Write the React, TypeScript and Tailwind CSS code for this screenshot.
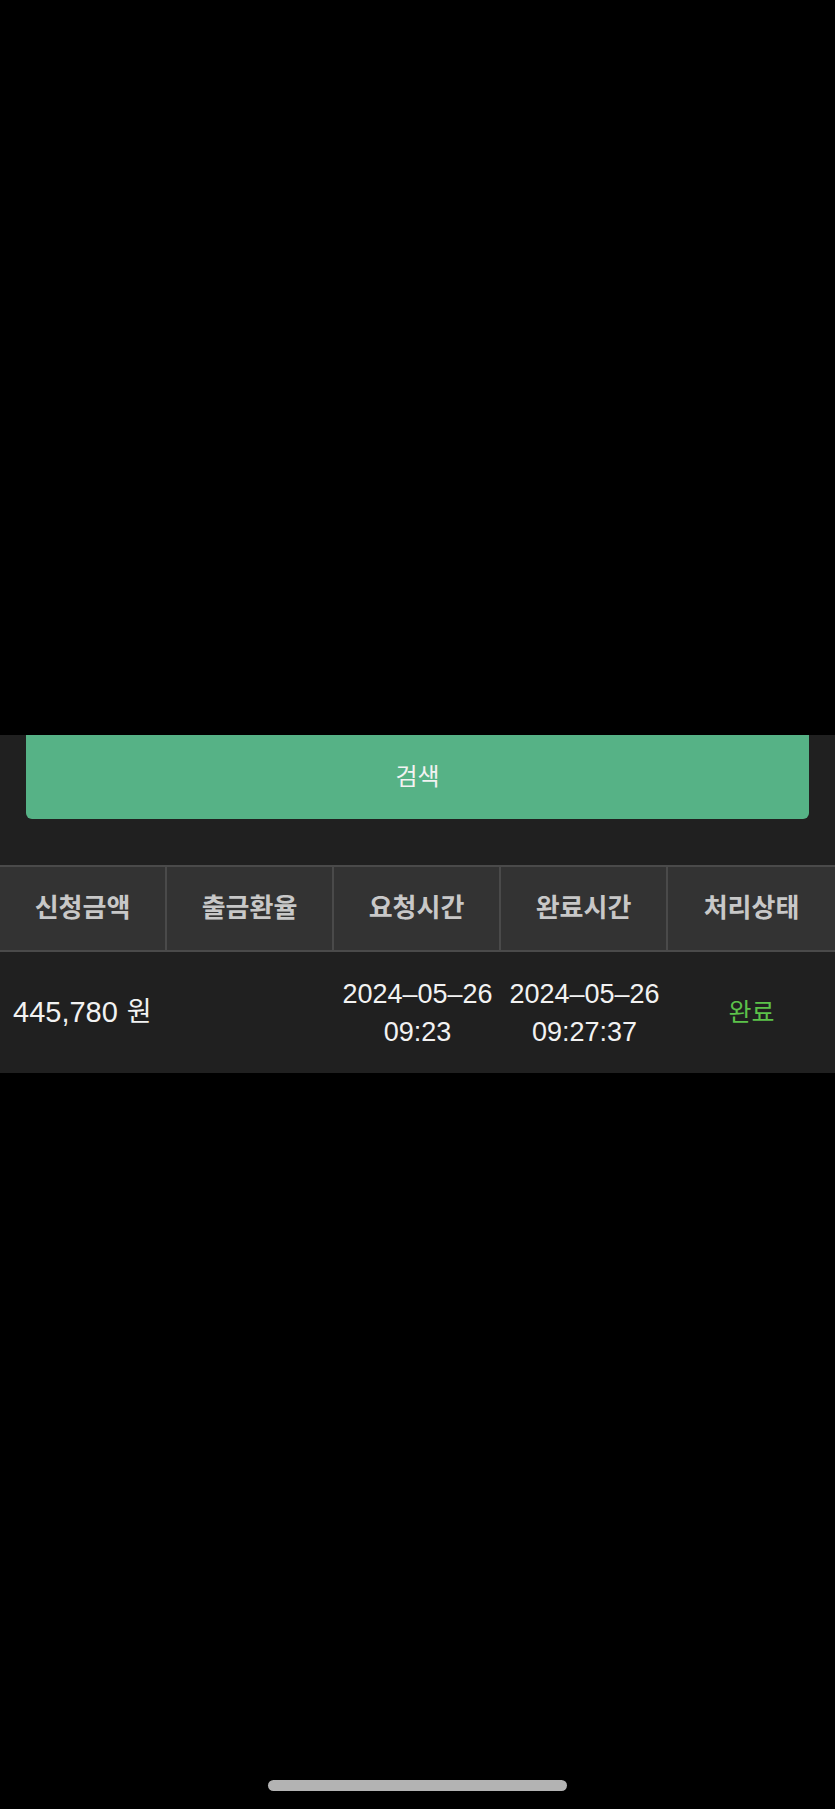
const FONT = { fontFamily: '"Liberation Sans", "Noto Sans CJK KR", sans-serif' };

const HEADERS = ["신청금액", "출금환율", "요청시간", "완료시간", "처리상태"];

export default function App() {
  return (
    <div className="flex min-h-[1809px] w-full flex-col bg-black" style={FONT}>
      {/* 상단 가림 영역 */}
      <div className="h-[735px] shrink-0 bg-black" />

      <div className="bg-[#202020] px-[26px] pb-[46px]">
        <button className="flex h-[84px] w-full items-center justify-center rounded-b-[6px] bg-[#56b286] text-[24px] text-[#f2f2f2]">
          검색
        </button>
      </div>

      <div className="grid grid-cols-5 border-y-2 border-[#4a4a4a] bg-[#333333]">
        {HEADERS.map((h, i) => (
          <div
            key={h}
            className={
              "flex h-[83px] items-center justify-center text-[26px] font-bold text-[#c8c8c8] " +
              (i < HEADERS.length - 1 ? "border-r-2 border-[#4a4a4a]" : "")
            }
          >
            {h}
          </div>
        ))}
      </div>

      <div className="grid h-[121px] grid-cols-5 bg-[#202020] text-[27px] text-[#f2f2f2]">
        <div className="flex items-center gap-[9px] whitespace-nowrap pl-[13px] text-[29px]">
          <span>445,780</span>
          <span className="text-[27px]">원</span>
        </div>
        <div />
        <div className="flex flex-col items-center justify-center whitespace-nowrap leading-[38px]">
          <span>2024–05–26</span>
          <span>09:23</span>
        </div>
        <div className="flex flex-col items-center justify-center whitespace-nowrap leading-[38px]">
          <span>2024–05–26</span>
          <span>09:27:37</span>
        </div>
        <div className="flex items-center justify-center text-[25px] text-[#5cc24a]">완료</div>
      </div>

      <div className="flex flex-1 flex-col justify-end">
        <div className="mb-[18px] flex justify-center">
          <div className="h-[11px] w-[299px] rounded-full bg-[#b3b3b3]" />
        </div>
      </div>
    </div>
  );
}
